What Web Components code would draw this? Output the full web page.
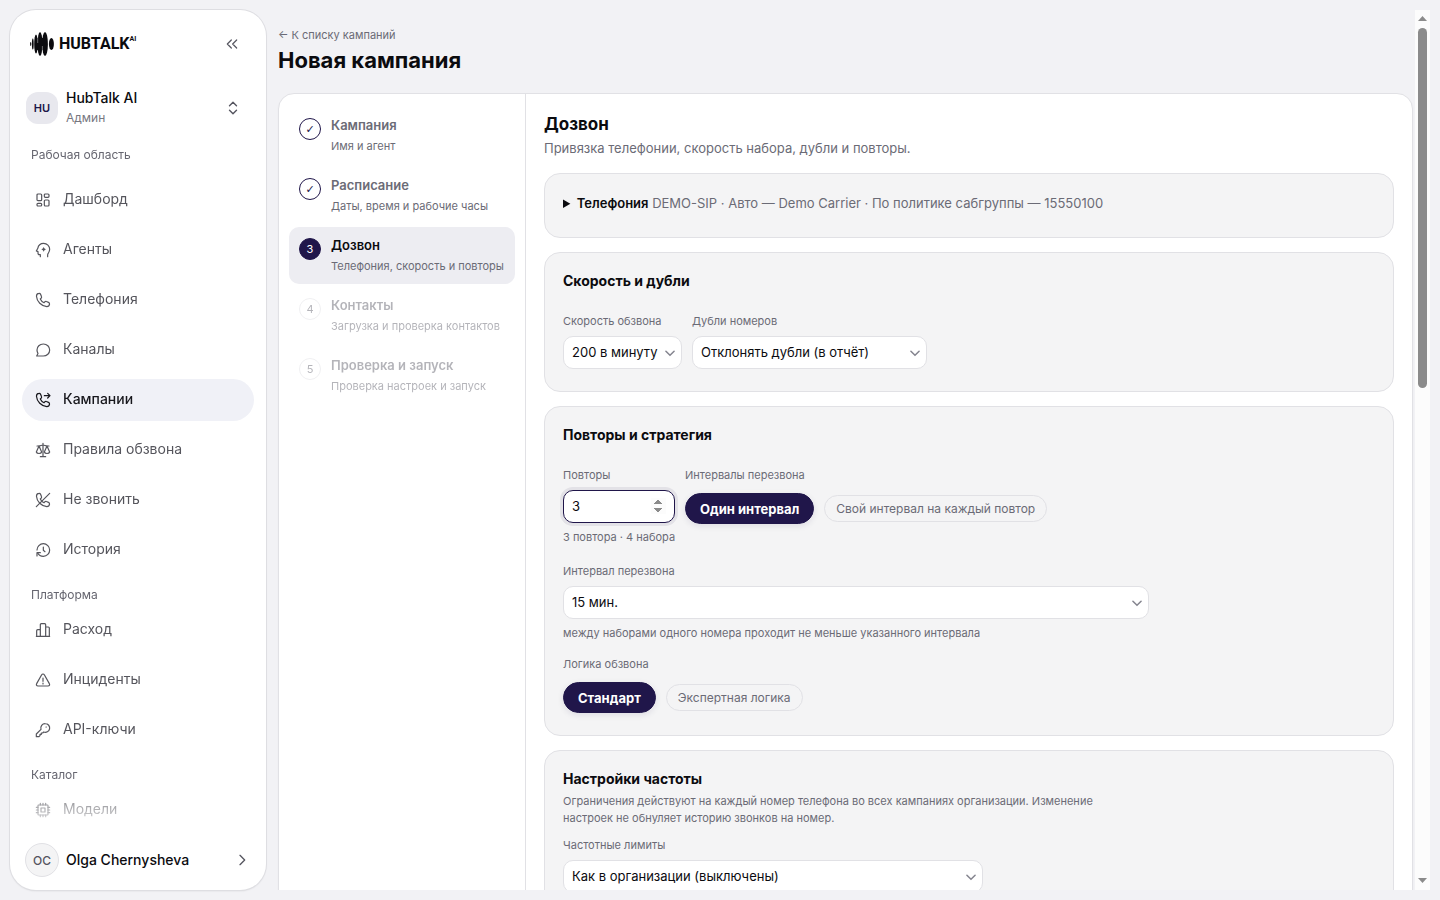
<!DOCTYPE html>
<html lang="ru">
<head>
<meta charset="utf-8">
<meta name="viewport" content="width=device-width, initial-scale=1">
<title>Новая кампания</title>
<style>
	:root {
	  --accent: #20164a;
	  --ink: #0b0b0f;
	  --muted: #6b6b76;
	  --line: #e1e1e5;
	  --page: #f2f2f5;
	}
	html, body {
	  height: 100%;
	  margin: 0;
	}
	body {
	  background: var(--page);
	  color: var(--ink);
	  font-family: Inter, "Liberation Sans", sans-serif;
	}
</style>
</head>
<body>
<app-shell>
	<app-sidebar slot="sidebar">
	  <nav-group label="Рабочая область" first>
		<nav-item icon="dashboard">Дашборд</nav-item>
		<nav-item icon="agent">Агенты</nav-item>
		<nav-item icon="phone">Телефония</nav-item>
		<nav-item icon="chat">Каналы</nav-item>
		<nav-item icon="campaign" active>Кампании</nav-item>
		<nav-item icon="scales">Правила обзвона</nav-item>
		<nav-item icon="nocall">Не звонить</nav-item>
		<nav-item icon="history">История</nav-item>
	  </nav-group>
	  <nav-group label="Платформа">
		<nav-item icon="bars">Расход</nav-item>
		<nav-item icon="alert">Инциденты</nav-item>
		<nav-item icon="key">API-ключи</nav-item>
	  </nav-group>
	  <nav-group label="Каталог">
		<nav-item icon="chip">Модели</nav-item>
	  </nav-group>
	</app-sidebar>

	<page-header back="← К списку кампаний">Новая кампания</page-header>
	<campaign-wizard>
	  <wizard-step slot="steps" mark="✓" state="done" hint="Имя и агент">Кампания</wizard-step>
	  <wizard-step slot="steps" mark="✓" state="done" hint="Даты, время и рабочие часы">Расписание</wizard-step>
	  <wizard-step slot="steps" mark="3" state="current" hint="Телефония, скорость и повторы">Дозвон</wizard-step>
	  <wizard-step slot="steps" mark="4" state="next" hint="Загрузка и проверка контактов">Контакты</wizard-step>
	  <wizard-step slot="steps" mark="5" state="next" hint="Проверка настроек и запуск">Проверка и запуск</wizard-step>

	  <span slot="title">Дозвон</span>
	  <span slot="lead">Привязка телефонии, скорость набора, дубли и повторы.</span>

	  <form-card>
		<summary-line label="Телефония">DEMO-SIP · Авто — Demo Carrier · По политике сабгруппы — 15550100</summary-line>
	  </form-card>
	  <form-card heading="Скорость и дубли">
		<field-row>
		  <select-field label="Скорость обзвона" value="200 в минуту" style="--width: 119px"></select-field>
		  <select-field label="Дубли номеров" value="Отклонять дубли (в отчёт)" style="--width: 235px"></select-field>
		</field-row>
	  </form-card>
	  <form-card heading="Повторы и стратегия">
		<field-row>
		  <number-field label="Повторы" value="3" hint="3 повтора · 4 набора"></number-field>
		  <chip-group label="Интервалы перезвона" options="Один интервал|Свой интервал на каждый повтор"></chip-group>
		</field-row>
		<select-field label="Интервал перезвона" value="15 мин." hint="между наборами одного номера проходит не меньше указанного интервала" style="--width: 586px"></select-field>
		<chip-group label="Логика обзвона" options="Стандарт|Экспертная логика"></chip-group>
	  </form-card>
	  <form-card heading="Настройки частоты" note="Ограничения действуют на каждый номер телефона во всех кампаниях организации. Изменение настроек не обнуляет историю звонков на номер.">
		<select-field label="Частотные лимиты" value="Как в организации (выключены)" style="--width: 420px"></select-field>
	  </form-card>
	</campaign-wizard>
</app-shell>

<script>
// Attach an open shadow root and fill it
function render(el, css, html) {
	const root = el.attachShadow({ mode: 'open' });
	root.innerHTML = `<style>* { box-sizing: border-box; } ${css}</style>${html}`;
	return root;
}

// 24x24 stroke icons
const ICONS = {
	dashboard: '<rect x="3" y="3" width="7" height="10" rx="1.5"/><rect x="14" y="3" width="7" height="5" rx="1.5"/><rect x="3" y="17" width="7" height="4" rx="1.5"/><rect x="14" y="12" width="7" height="9" rx="1.5"/>',
	agent: '<path d="M8 22v-3H6.500Q4.500 19 4.500 17v-2.500L2 13.500 4.200 9.500C5 4.800 8.500 2 13 2c5 0 9 4 9 9 0 3.500-1.500 5-2.500 6.500-.8 1.300-.5 3-.5 4.500"/><path d="M13 7.500l1.200 2.300 2.300 1.200-2.300 1.200L13 14.500l-1.200-2.300L9.500 11l2.300-1.200z" fill="currentColor" stroke="none"/>',
	phone: '<path d="M8.500 3.800C8 2.600 7 2 5.800 2.200 3.700 2.500 2.200 4.200 2.200 6.300 2.800 14.500 9.500 21.200 17.700 21.800c2.100 0 3.800-1.500 4.100-3.600.2-1.200-.4-2.200-1.600-2.700l-3-1.200c-.9-.4-1.900-.1-2.600.6l-1.100 1.200c-2.400-1.100-4.500-3.200-5.600-5.600l1.200-1.100c.7-.7 1-1.700.6-2.600z"/>',
	chat: '<path d="M12.500 3C7 3 3 7 3 12c0 2 .6 3.700 1.500 5.200L2.500 21h9.800C18 21 22 17 22 12s-4-9-9.500-9z"/>',
	campaign: '<path d="M8.500 3.800C8 2.600 7 2 5.800 2.200 3.700 2.500 2.200 4.200 2.200 6.300 2.800 14.500 9.500 21.200 17.700 21.800c2.100 0 3.800-1.500 4.100-3.600.2-1.200-.4-2.200-1.600-2.700l-3-1.200c-.9-.4-1.900-.1-2.600.6l-1.100 1.200c-2.400-1.100-4.500-3.200-5.600-5.600l1.200-1.100c.7-.7 1-1.700.6-2.600z"/><path d="M14 5.500h8M19 2l3.500 3.500L19 9"/>',
	scales: '<path d="M12 2v20M8 22h8M3 6h3c2 0 4-1.500 6-1.500S16 6 18 6h3"/><path d="M6 6L2 15c1 3 7 3 8 0zM18 6l-4 9c1 3 7 3 8 0z"/>',
	nocall: '<path d="M8.500 3.800C8 2.600 7 2 5.800 2.200 3.700 2.500 2.200 4.200 2.200 6.300 2.800 14.500 9.500 21.200 17.700 21.800c2.100 0 3.800-1.500 4.100-3.600.2-1.200-.4-2.200-1.600-2.700l-3-1.200c-.9-.4-1.900-.1-2.600.6l-1.100 1.200c-2.400-1.100-4.500-3.200-5.600-5.600l1.200-1.100c.7-.7 1-1.700.6-2.600z"/><path d="M22 2L2 22"/>',
	history: '<path d="M3 12c0-5 4.300-9.500 9.500-9.500S22 7 22 12s-4 9.500-9.500 9.500c-4 0-7-2-8.500-5"/><path d="M3 21v-5h5M12.500 7.500v5l2.500 2"/>',
	bars: '<path d="M2 21.500h20M2.500 21.500V13c0-1 .5-1.500 1.500-1.500h4v10M8 21.500V4c0-1 .5-1.500 1.500-1.500h5c1 0 1.500.5 1.500 1.500v17.500M16 7.500h4c1 0 1.500.5 1.500 1.500v12.500"/>',
	alert: '<path d="M12 3c1 0 1.600.5 2.200 1.500l7.300 13c1 1.900.2 3.500-2 3.500h-15c-2.200 0-3-1.600-2-3.500l7.300-13C10.400 3.500 11 3 12 3z"/><path d="M12 9v5M12 16.500v1.500"/>',
	key: '<path d="M15.500 2.500a6.500 6.500 0 1 1-2.500 12.500l-1.500 1.500H9.500v2H7.500v2L6 22H2v-4l7-7a6.500 6.500 0 0 1 6.500-8.500z"/><path d="M16.500 7.500h.5"/>',
	chip: '<rect x="4.500" y="4.500" width="15" height="15" rx="1"/><rect x="9" y="9" width="6" height="6"/><path d="M8 2v2.500M12 2v2.500M16 2v2.500M8 19.500V22M12 19.500V22M16 19.500V22M2 8h2.500M2 12h2.500M2 16h2.500M19.500 8H22M19.500 12H22M19.500 16H22"/>',
	collapse: '<path d="M11 6l-6 6 6 6M19 6l-6 6 6 6"/>',
	updown: '<path d="M6 8l6-6 6 6M6 16l6 6 6-6"/>',
	next: '<path d="M9 5l7 7-7 7"/>',
	down: '<path d="M5 9l7 7 7-7"/>'
};

function icon(name, size, stroke = 1.8) {
	return `<svg width="${size}" height="${size}" viewBox="0 0 24 24" fill="none" stroke="currentColor" stroke-width="${stroke}" stroke-linecap="round" stroke-linejoin="round" aria-hidden="true">${ICONS[name]}</svg>`;
}

// Page frame: sidebar on the left, scrolling content on the right
class AppShell extends HTMLElement {
	constructor() {
	  super();
	  this.root = render(this, `
		:host {
		  display: grid;
		  grid-template-columns: 256px minmax(0, 1fr) 15px;
		  box-sizing: border-box;
		  height: 100vh;
		  padding: 10px;
		}
		main {
		  min-height: 0;
		  overflow-y: auto;
		  padding: 0 2px 0 12px;
		  scrollbar-width: none;
		}
	  `, `
		<slot name="sidebar"></slot>
		<main><slot></slot></main>
		<scroll-bar></scroll-bar>
	  `);
	}

	connectedCallback() {
	  const main = this.root.querySelector('main');
	  const bar = this.root.querySelector('scroll-bar');
	  const sync = () => bar.update(main);
	  main.addEventListener('scroll', sync);
	  new ResizeObserver(sync).observe(main);
	}
}

class ScrollBar extends HTMLElement {
	constructor() {
	  super();
	  this.root = render(this, `
		:host {
		  display: flex;
		  flex-direction: column;
		  align-items: center;
		  background: #fcfcfc;
		}
		svg { flex: none; }
		.track {
		  flex: 1;
		  width: 9px;
		}
		.before { height: var(--before, 0%); }
		.thumb {
		  height: var(--thumb, 43%);
		  border-radius: 5px;
		  background: #8b8b8b;
		}
	  `, `
		<svg width="15" height="18" fill="#8b8b8b"><path d="M3 11l4.500-5 4.500 5z"/></svg>
		<div class="track"><div class="before"></div><div class="thumb"></div></div>
		<svg width="15" height="18" fill="#8b8b8b"><path d="M3 6l4.500 5L12 6z"/></svg>
	  `);
	}

	update(box) {
	  this.style.setProperty('--before', `${box.scrollTop / box.scrollHeight * 100}%`);
	  this.style.setProperty('--thumb', `${box.clientHeight / box.scrollHeight * 100}%`);
	}
}
customElements.define('scroll-bar', ScrollBar);
customElements.define('app-shell', AppShell);

class AppSidebar extends HTMLElement {
	constructor() {
	  super();
	  render(this, `
		:host {
		  display: flex;
		  flex-direction: column;
		  box-sizing: border-box;
		  min-height: 0;
		  padding: 22px 12px 13px;
		  background: #fff;
		  border-radius: 26px;
		  box-shadow: 0 0 0 1px #dedee2, 0 1px 2px rgba(0, 0, 0, 0.12);
		}
		button {
		  display: flex;
		  align-items: center;
		  margin: 0;
		  padding: 0;
		  border: 0;
		  background: none;
		  color: inherit;
		  font: inherit;
		  text-align: left;
		}
		.top {
		  display: flex;
		  align-items: center;
		  justify-content: space-between;
		  height: 24px;
		  padding: 0 14px 0 8px;
		}
		button > svg { color: #55555f; }
		.logo {
		  display: flex;
		  align-items: center;
		  gap: 5px;
		  color: #0b0b0f;
		  text-decoration: none;
		}
		.logo span {
		  display: flex;
		  font: 700 16px/24px Roboto, sans-serif;
		}
		.logo sup {
		  font-size: 7px;
		  line-height: 14px;
		}
		.workspace {
		  gap: 8px;
		  margin: 32px 0 17px;
		  padding: 0 14px 0 4px;
		}
		.badge {
		  display: grid;
		  place-items: center;
		  width: 32px;
		  height: 32px;
		  border-radius: 12px;
		  background: #e8e8ee;
		  color: var(--accent);
		  font-size: 11px;
		  font-weight: 600;
		}
		.who {
		  flex: 1;
		  font-size: 14px;
		  font-weight: 500;
		  line-height: 20px;
		}
		.who small {
		  display: block;
		  color: #777780;
		  font-size: 12px;
		  font-weight: 400;
		}
		nav {
		  flex: 1;
		  min-height: 0;
		  overflow: hidden;
		  -webkit-mask-image: linear-gradient(to top, transparent, #000 56px);
		  mask-image: linear-gradient(to top, transparent, #000 56px);
		}
		.user {
		  gap: 7px;
		  padding: 8px 4px 0 3px;
		}
		.user .badge {
		  width: 34px;
		  height: 34px;
		  border: 1px solid var(--line);
		  border-radius: 50%;
		  background: #f4f4f5;
		  color: #55555f;
		  font-size: 12px;
		  font-weight: 500;
		}
	  `, `
		<div class="top">
		  <a class="logo" href="#">
			<svg width="24" height="24" viewBox="0 0 24 24" fill="currentColor" aria-hidden="true">
			  <ellipse cx=".7" cy="12" rx=".6" ry="2"/><ellipse cx="2.800" cy="12" rx=".9" ry="5.500"/>
			  <ellipse cx="6" cy="12" rx="1.800" ry="9.500"/><ellipse cx="10" cy="12" rx="2.500" ry="12"/>
			  <ellipse cx="15" cy="12" rx="2.900" ry="12"/><rect x="5.500" y="6" width="11" height="12"/>
			  <ellipse cx="21.400" cy="12" rx="2.500" ry="6"/>
			  <path d="M7.700 2v9M12.400 14v9" stroke="#fff" stroke-width=".4"/>
			</svg>
			<span>HUBTALK<sup>AI</sup></span>
		  </a>
		  <button type="button" aria-label="Свернуть меню">${icon('collapse', 16)}</button>
		</div>
		<button class="workspace" type="button">
		  <span class="badge">HU</span>
		  <span class="who">HubTalk AI<small>Админ</small></span>
		  ${icon('updown', 14, 2.4)}
		</button>
		<nav><slot></slot></nav>
		<button class="user" type="button">
		  <span class="badge">OC</span>
		  <span class="who">Olga Chernysheva</span>
		  ${icon('next', 16, 2)}
		</button>
	  `);
	}
}
customElements.define('app-sidebar', AppSidebar);

class NavGroup extends HTMLElement {
	constructor() {
	  super();
	  render(this, `
		:host { display: block; padding-top: 14px; }
		:host([first]) { padding-top: 0; }
		p {
		  margin: 0 9px 4px;
		  color: #666670;
		  font-size: 12px;
		  line-height: 20px;
		}
		:host([first]) p { margin-bottom: 14px; }
		div {
		  display: flex;
		  flex-direction: column;
		  gap: 8px;
		}
	  `, `
		<p>${this.getAttribute('label')}</p>
		<div><slot></slot></div>
	  `);
	}
}
customElements.define('nav-group', NavGroup);

class NavItem extends HTMLElement {
	constructor() {
	  super();
	  render(this, `
		:host { display: block; }
		a {
		  display: flex;
		  align-items: center;
		  gap: 12px;
		  height: 42px;
		  padding: 0 13px;
		  border-radius: 21px;
		  color: #55555c;
		  font-size: 14px;
		  text-decoration: none;
		}
		span { padding-bottom: 3px; }
		:host([active]) a {
		  background: #f0f1f7;
		  color: #18181d;
		  font-weight: 500;
		}
	  `, `
		<a href="#">${icon(this.getAttribute('icon'), 16)}<span><slot></slot></span></a>
	  `);
	}
}
customElements.define('nav-item', NavItem);

class PageHeader extends HTMLElement {
	constructor() {
	  super();
	  render(this, `
		:host { display: block; padding: 16px 0 18px; }
		a {
		  display: block;
		  width: fit-content;
		  color: var(--muted);
		  font-size: 11px;
		  line-height: 18px;
		  text-decoration: none;
		}
		h1 {
		  margin: 2px 0 0;
		  font-size: 22px;
		  font-weight: 700;
		  line-height: 29px;
		}
	  `, `
		<a href="#">${this.getAttribute('back')}</a>
		<h1><slot></slot></h1>
	  `);
	}
}
customElements.define('page-header', PageHeader);

class CampaignWizard extends HTMLElement {
	constructor() {
	  super();
	  render(this, `
		:host {
		  display: grid;
		  grid-template-columns: 247px minmax(0, 1fr);
		  box-sizing: border-box;
		  min-height: 220vh;
		  background: #fff;
		  border: 1px solid var(--line);
		  border-radius: 16px;
		  box-shadow: 0 1px 2px rgba(0, 0, 0, 0.04);
		}
		.steps {
		  display: flex;
		  flex-direction: column;
		  gap: 3px;
		  padding: 13px 10px;
		  border-right: 1px solid var(--line);
		}
		.panel {
		  display: flex;
		  flex-direction: column;
		  gap: 14px;
		  padding: 18px;
		}
		h2 {
		  margin: 0;
		  font-size: 17px;
		  font-weight: 700;
		  line-height: 25px;
		}
		p {
		  margin: 0;
		  color: var(--muted);
		  font-size: 13px;
		  line-height: 22px;
		}
	  `, `
		<div class="steps"><slot name="steps"></slot></div>
		<div class="panel">
		  <header>
			<h2><slot name="title"></slot></h2>
			<p><slot name="lead"></slot></p>
		  </header>
		  <slot></slot>
		</div>
	  `);
	}
}
customElements.define('campaign-wizard', CampaignWizard);

class WizardStep extends HTMLElement {
	constructor() {
	  super();
	  const off = this.getAttribute('state') === 'next' ? 'disabled' : '';
	  render(this, `
		:host { display: block; }
		button {
		  display: flex;
		  gap: 10px;
		  width: 100%;
		  height: 57px;
		  padding: 8px 10px;
		  border: 0;
		  border-radius: 10px;
		  background: none;
		  color: var(--muted);
		  font-family: inherit;
		  text-align: left;
		  white-space: nowrap;
		}
		.mark {
		  display: grid;
		  flex: none;
		  place-items: center;
		  width: 22px;
		  height: 22px;
		  margin-top: 3px;
		  border: 1px solid var(--accent);
		  border-radius: 50%;
		  color: var(--accent);
		  font-size: 11px;
		}
		strong, small { display: block; }
		strong {
		  font-size: 13px;
		  font-weight: 600;
		  line-height: 20px;
		}
		small {
		  font-size: 11px;
		  line-height: 22px;
		}
		:host([state=done]) .mark { font-family: "DejaVu Sans", sans-serif; }
		:host([state=current]) button { background: #ededf2; }
		:host([state=current]) strong { color: var(--ink); }
		:host([state=current]) .mark {
		  background: var(--accent);
		  color: #fff;
		}
		:host([state=next]) button { opacity: 0.5; }
		:host([state=next]) .mark {
		  border-color: var(--line);
		  color: var(--muted);
		}
	  `, `
		<button type="button" ${off}>
		  <span class="mark">${this.getAttribute('mark')}</span>
		  <span><strong><slot></slot></strong><small>${this.getAttribute('hint')}</small></span>
		</button>
	  `);
	}
}
customElements.define('wizard-step', WizardStep);

class FormCard extends HTMLElement {
	constructor() {
	  super();
	  const heading = this.getAttribute('heading');
	  const note = this.getAttribute('note');
	  render(this, `
		:host {
		  display: block;
		  padding: 18px 18px 22px;
		  background: #f4f4f5;
		  border: 1px solid var(--line);
		  border-radius: 16px;
		}
		h3 {
		  margin: 0;
		  font-size: 14px;
		  font-weight: 700;
		  line-height: 20px;
		}
		p {
		  max-width: 560px;
		  margin: 4px 0 0;
		  color: var(--muted);
		  font-size: 11px;
		  line-height: 17px;
		}
		.body {
		  display: flex;
		  flex-direction: column;
		  gap: 15px;
		}
		h3 + .body { margin-top: 22px; }
		p + .body { margin-top: 10px; }
		::slotted(field-row:not(:last-child)) { margin-bottom: 3px; }
	  `, `
		${heading ? `<h3>${heading}</h3>` : ''}
		${note ? `<p>${note}</p>` : ''}
		<div class="body"><slot></slot></div>
	  `);
	}
}
customElements.define('form-card', FormCard);

class SummaryLine extends HTMLElement {
	constructor() {
	  super();
	  render(this, `
		:host { display: block; }
		summary {
		  color: var(--ink);
		  font-size: 13px;
		  line-height: 23px;
		}
		strong { font-weight: 600; }
		span { color: var(--muted); }
	  `, `
		<details>
		  <summary><strong>${this.getAttribute('label')}</strong> <span><slot></slot></span></summary>
		</details>
	  `);
	}
}
customElements.define('summary-line', SummaryLine);

class FieldRow extends HTMLElement {
	constructor() {
	  super();
	  render(this, `
		:host {
		  display: flex;
		  flex-wrap: wrap;
		  align-items: flex-start;
		  gap: 10px;
		}
	  `, '<slot></slot>');
	}
}
customElements.define('field-row', FieldRow);

// Shared by all the form fields
const FIELD_CSS = `
	:host { display: block; }
	label, .label, .hint {
	  display: block;
	  color: var(--muted);
	  font-size: 11px;
	  line-height: 16px;
	}
	label { margin-bottom: 7px; }
	.hint { margin-top: 6px; }
	select, input {
	  display: block;
	  width: 100%;
	  height: 33px;
	  margin: 0;
	  padding: 0 8px 2px;
	  border: 1px solid var(--line);
	  border-radius: 10px;
	  background: #fff;
	  color: var(--ink);
	  font: 13px Inter, "Liberation Sans", sans-serif;
	}
`;

class SelectField extends HTMLElement {
	constructor() {
	  super();
	  const hint = this.getAttribute('hint');
	  render(this, `${FIELD_CSS}
		.box {
		  display: grid;
		  align-items: center;
		  width: var(--width);
		  max-width: 100%;
		}
		.box > * { grid-area: 1 / 1; }
		select { appearance: none; }
		svg {
		  justify-self: end;
		  margin-right: 5px;
		  color: #85858f;
		  pointer-events: none;
		}
	  `, `
		<label for="field">${this.getAttribute('label')}</label>
		<div class="box">
		  <select id="field"><option>${this.getAttribute('value')}</option></select>
		  ${icon('down', 14, 2.6)}
		</div>
		${hint ? `<span class="hint">${hint}</span>` : ''}
	  `);
	}
}
customElements.define('select-field', SelectField);

class NumberField extends HTMLElement {
	constructor() {
	  super();
	  render(this, `${FIELD_CSS}
		:host { width: 112px; }
		.hint { white-space: nowrap; }
		input {
		  border-color: var(--accent);
		  box-shadow: 0 0 0 3px rgba(32, 22, 74, 0.08);
		}
		input::-webkit-inner-spin-button { opacity: 1; }
	  `, `
		<label for="field">${this.getAttribute('label')}</label>
		<input id="field" type="number" min="0" value="${this.getAttribute('value')}">
		<span class="hint">${this.getAttribute('hint')}</span>
	  `);
	}
}
customElements.define('number-field', NumberField);

// Row of pill buttons, the first one is pressed
class ChipGroup extends HTMLElement {
	constructor() {
	  super();
	  const chips = this.getAttribute('options').split('|').map((text, i) =>
		`<button type="button" aria-pressed="${i === 0}">${text}</button>`).join('');
	  render(this, `${FIELD_CSS}
		.label { margin-bottom: 10px; }
		.chips {
		  display: flex;
		  flex-wrap: wrap;
		  align-items: center;
		  gap: 10px;
		}
		button {
		  height: 27px;
		  margin: 0;
		  padding: 0 11px;
		  border: 1px solid var(--line);
		  border-radius: 16px;
		  background: none;
		  color: var(--muted);
		  font-family: inherit;
		  font-size: 12px;
		}
		button[aria-pressed=true] {
		  height: 31px;
		  padding: 0 14px;
		  border-color: var(--accent);
		  background: var(--accent);
		  box-shadow: 0 2px 6px rgba(32, 22, 74, 0.1);
		  color: #fff;
		  font-size: 13px;
		  font-weight: 700;
		}
	  `, `
		<span class="label" id="name">${this.getAttribute('label')}</span>
		<div class="chips" role="group" aria-labelledby="name">${chips}</div>
	  `);
	}
}
customElements.define('chip-group', ChipGroup);
</script>
</body>
</html>
